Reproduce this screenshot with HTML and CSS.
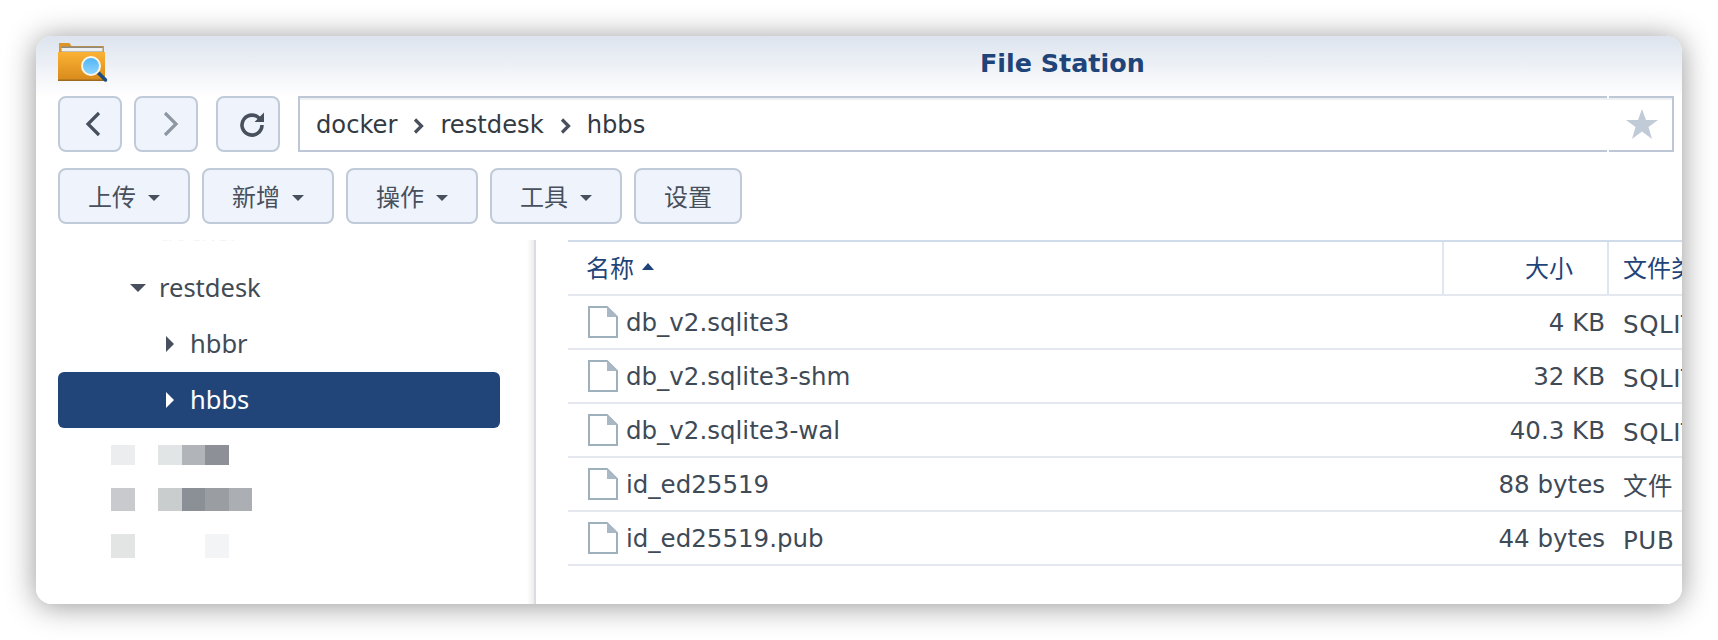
FILE: index.html
```html
<!DOCTYPE html>
<html lang="zh">
<head>
<meta charset="utf-8">
<title>File Station</title>
<link rel="stylesheet" href="styles.css">
</head>
<body>
<div class="window">
  <header class="titlebar">
    <svg class="app-icon" width="50" height="42" viewBox="0 0 50 42">
      <defs>
        <linearGradient id="fold" x1="0" y1="0" x2="0" y2="1"><stop offset="0" stop-color="#fbb233"/><stop offset="1" stop-color="#d88a1c"/></linearGradient>
        <linearGradient id="lens" x1="0" y1="0" x2="0" y2="1"><stop offset="0" stop-color="#4eb4f4"/><stop offset="1" stop-color="#8fd6ff"/></linearGradient>
      </defs>
      <path d="M1 1h10.500l2 3h32.500v7H1z" fill="#dd9526"/>
      <rect x="3.500" y="4.500" width="41" height="7" fill="#8d8b84"/>
      <rect x="3.500" y="6" width="41" height="3.500" fill="#eceef0"/>
      <path d="M0 10h47v28.500H0z" fill="url(#fold)"/>
      <rect x="0" y="37.500" width="47" height="1.500" fill="#9c6a1e"/>
      <path d="M40.500 31l7 7" stroke="#1b4d80" stroke-width="3.500" stroke-linecap="round"/>
      <circle cx="33" cy="24" r="9" fill="url(#lens)" stroke="#fdf6e6" stroke-width="2"/>
    </svg>
    <h1 class="app-title">File Station</h1>
  </header>

  <nav class="navbar">
    <button class="btn square back" type="button" aria-label="后退">
      <svg width="18" height="26" viewBox="0 0 18 26"><path d="M15 2 4 13l11 11" fill="none" stroke="#47505c" stroke-width="3.200"/></svg>
    </button>
    <button class="btn square forward" type="button" aria-label="前进">
      <svg width="18" height="26" viewBox="0 0 18 26"><path d="M3 2l11 11L3 24" fill="none" stroke="#8e97a2" stroke-width="3.200"/></svg>
    </button>
    <button class="btn square refresh" type="button" aria-label="刷新">
      <svg width="26" height="26" viewBox="0 0 26 26"><path d="M21.300 8.500A10 10 0 1 0 23 14" fill="none" stroke="#47505c" stroke-width="3.600"/><path d="M25 1.500V11h-9.500z" fill="#47505c"/></svg>
    </button>
    <div class="address">
      <div class="crumbs">
        <span>docker</span>
        <svg class="crumb-sep" width="12" height="16" viewBox="0 0 12 16"><path d="M2 1.500 8.500 8 2 14.500" fill="none" stroke="#47505c" stroke-width="3.200"/></svg>
        <span>restdesk</span>
        <svg class="crumb-sep" width="12" height="16" viewBox="0 0 12 16"><path d="M2 1.500 8.500 8 2 14.500" fill="none" stroke="#47505c" stroke-width="3.200"/></svg>
        <span>hbbs</span>
      </div>
      <div class="fav">
        <svg width="32" height="30" viewBox="0 0 32 30"><path d="M16 0l4 11h12l-9.500 7 3.500 12-10-7.500L6 30l3.500-12L0 11h12z" fill="#c1cbd8"/></svg>
      </div>
    </div>
  </nav>

  <div class="toolbar">
    <button class="btn tool" type="button">上传<i class="caret"></i></button>
    <button class="btn tool" type="button">新增<i class="caret"></i></button>
    <button class="btn tool" type="button">操作<i class="caret"></i></button>
    <button class="btn tool" type="button">工具<i class="caret"></i></button>
    <button class="btn tool plain" type="button">设置</button>
  </div>

  <main class="main">
    <aside class="sidebar">
      <div class="tree-clip"><span>docker</span></div>
      <div class="node level1"><i class="arrow-down"></i><span>restdesk</span></div>
      <div class="node level2"><i class="arrow-right"></i><span>hbbr</span></div>
      <div class="node level2 selected"><i class="arrow-right"></i><span>hbbs</span></div>
      <div class="mosaic m1"><i class="c-ec"></i><i></i><i class="c-e2"></i><i class="c-b1"></i><i class="c-8e"></i></div>
      <div class="mosaic m2"><i class="c-c8"></i><i></i><i class="c-cb"></i><i class="c-8b"></i><i class="c-9a"></i><i class="c-ab"></i></div>
      <div class="mosaic m3"><i class="c-e3"></i><i></i><i></i><i></i><i class="c-f3"></i></div>
    </aside>
    <section class="files">
      <div class="row head">
        <div class="cell name-h">名称<i class="sort"></i></div>
        <div class="cell size-h">大小</div>
        <div class="cell type-h">文件类型</div>
      </div>
      <div class="row">
        <div class="cell name"><svg class="file-icon" width="30" height="32" viewBox="0 0 30 32"><path d="M1 1h18l10 10v20H1z" fill="#fff" stroke="#9fb0bd" stroke-width="2"/><path d="M19 1l10 10h-10z" fill="#a9b8c4"/></svg>db_v2.sqlite3</div>
        <div class="cell size">4 KB</div>
        <div class="cell type">SQLITE3 文件</div>
      </div>
      <div class="row">
        <div class="cell name"><svg class="file-icon" width="30" height="32" viewBox="0 0 30 32"><path d="M1 1h18l10 10v20H1z" fill="#fff" stroke="#9fb0bd" stroke-width="2"/><path d="M19 1l10 10h-10z" fill="#a9b8c4"/></svg>db_v2.sqlite3-shm</div>
        <div class="cell size">32 KB</div>
        <div class="cell type">SQLITE3-SHM 文件</div>
      </div>
      <div class="row">
        <div class="cell name"><svg class="file-icon" width="30" height="32" viewBox="0 0 30 32"><path d="M1 1h18l10 10v20H1z" fill="#fff" stroke="#9fb0bd" stroke-width="2"/><path d="M19 1l10 10h-10z" fill="#a9b8c4"/></svg>db_v2.sqlite3-wal</div>
        <div class="cell size">40.3 KB</div>
        <div class="cell type">SQLITE3-WAL 文件</div>
      </div>
      <div class="row">
        <div class="cell name"><svg class="file-icon" width="30" height="32" viewBox="0 0 30 32"><path d="M1 1h18l10 10v20H1z" fill="#fff" stroke="#9fb0bd" stroke-width="2"/><path d="M19 1l10 10h-10z" fill="#a9b8c4"/></svg>id_ed25519</div>
        <div class="cell size">88 bytes</div>
        <div class="cell type">文件</div>
      </div>
      <div class="row">
        <div class="cell name"><svg class="file-icon" width="30" height="32" viewBox="0 0 30 32"><path d="M1 1h18l10 10v20H1z" fill="#fff" stroke="#9fb0bd" stroke-width="2"/><path d="M19 1l10 10h-10z" fill="#a9b8c4"/></svg>id_ed25519.pub</div>
        <div class="cell size">44 bytes</div>
        <div class="cell type">PUB 文件</div>
      </div>
    </section>
  </main>
</div>
</body>
</html>
```
FILE: styles.css
```css
* { box-sizing: border-box; }
html, body { margin: 0; height: 640px; overflow: hidden; background: #fff; }
body { padding: 36px; font-family: "Noto Sans", "Noto Sans CJK SC", sans-serif; }

.window {
  width: 1646px;
  height: 568px;
  border-radius: 16px;
  background: linear-gradient(#dde4ee 0, #fff 62px);
  box-shadow: 0 2px 30px rgba(0, 0, 0, .42);
  overflow: hidden;
  display: flex;
  flex-direction: column;
}

.titlebar { height: 60px; flex: none; display: flex; align-items: flex-start; padding: 6px 0 0 22px; }
.app-icon { flex: none; }
.app-title {
  margin: 6px 0 0 872px;
  font: bold 25.400px/30px "DejaVu Sans", sans-serif;
  color: #1f4479;
  white-space: nowrap;
}

.navbar { height: 56px; flex: none; display: flex; padding: 0 8px 0 22px; }
.btn {
  height: 56px;
  padding: 0;
  border: 2px solid #c0cad8;
  border-radius: 8px;
  background: #eff4fc;
  font: 24px/1 "Noto Sans CJK SC", sans-serif;
  color: #47505c;
  display: flex;
  align-items: center;
  justify-content: center;
}
.square { width: 64px; margin-right: 12px; }
.back { padding-left: 6px; }
.forward { padding-left: 10px; }
.refresh { margin-left: 6px; margin-right: 18px; padding-left: 8px; }
.address {
  position: relative;
  flex: 1;
  height: 56px;
  border: 2px solid #bdc7d5;
  box-shadow: inset 0 2px 0 #eef0f3;
  background: #fff;
  display: flex;
  align-items: center;
  justify-content: space-between;
}
.crumbs { display: flex; align-items: center; padding: 1px 0 0 16px; font: 24.200px "DejaVu Sans", sans-serif; color: #333a42; }
.crumb-sep { margin: 2px 15px 0 16px; }
.fav { width: 60px; display: flex; justify-content: center; }
.address::before, .address::after {
  content: "";
  position: absolute;
  right: 63px;
  width: 2px;
  height: 2px;
  background: #fff;
}
.address::before { top: -2px; }
.address::after { bottom: -2px; }

.toolbar { height: 56px; flex: none; margin-top: 16px; display: flex; gap: 12px; padding-left: 22px; }
.tool { width: 132px; }
.plain { width: 108px; }
.caret {
  width: 0; height: 0; margin-left: 12px; margin-top: 3px;
  border-left: 6.500px solid transparent;
  border-right: 6.500px solid transparent;
  border-top: 6.500px solid #47505c;
}

.main { flex: 1; min-height: 0; margin-top: 16px; display: flex; background: #fff; }
.sidebar {
  width: 500px;
  flex: none;
  border-right: 2px solid #d9dde3;
  padding: 0 34px 0 22px;
  overflow: hidden;
  background: linear-gradient(90deg, #fff calc(100% - 7px), #ececec);
}
.tree-clip { height: 20px; padding-left: 100px; overflow: hidden; font-size: 25.500px; color: #f4f4f4; }
.tree-clip span { display: block; margin-top: -26px; line-height: 34px; }
.node { height: 56px; display: flex; align-items: center; padding-bottom: 2px; font-size: 25.500px; color: #414b55; border-radius: 6px; }
.level1 { padding-left: 72px; }
.level2 { padding-left: 108px; }
.arrow-down {
  width: 0; height: 0; margin-right: 13px; margin-top: 2px;
  border-left: 8px solid transparent;
  border-right: 8px solid transparent;
  border-top: 8px solid #47505c;
}
.arrow-right {
  width: 0; height: 0; margin-right: 16px; margin-top: 2px;
  border-top: 8px solid transparent;
  border-bottom: 8px solid transparent;
  border-left: 8px solid #47505c;
}
.selected { background: #224579; color: #fff; }
.selected .arrow-right { border-left-color: #fff; }

.mosaic { display: flex; padding-left: 53px; }
.mosaic i { width: 23.500px; height: 100%; }
.m1 { height: 20px; margin-top: 17px; }
.m2 { height: 23px; margin-top: 23px; }
.m3 { height: 24px; margin-top: 23px; }
.c-ec { background: #ecedee; }
.c-e2 { background: #e2e5e6; }
.c-b1 { background: #b1b4b8; }
.c-8e { background: #8e9097; }
.c-c8 { background: #c8cacd; }
.c-cb { background: #c9cdce; }
.c-8b { background: #8b8f96; }
.c-9a { background: #9a9ea2; }
.c-ab { background: #abaeb2; }
.c-e3 { background: #e3e5e5; }
.c-f3 { background: #f3f4f6; }

.files { flex: 1; min-width: 0; margin-left: 32px; overflow: hidden; font: 24.500px "DejaVu Sans", "Noto Sans CJK SC", sans-serif; color: #3f4a57; }
.row { display: grid; grid-template-columns: 874px 165px 300px; height: 54px; border-bottom: 2px solid #e5e9ef; align-items: center; white-space: nowrap; }
.head { height: 56px; border-top: 2px solid #d0dcea; color: #1f4479; font: 24px "Noto Sans CJK SC", sans-serif; align-items: stretch; }
.cell { display: flex; align-items: center; }
.head .cell { padding-bottom: 3px; }
.name-h { padding-left: 18px; }
.size-h, .type-h { border-left: 2px solid #dde7f2; }
.size-h { justify-content: flex-end; padding-right: 34px; }
.type-h { padding-left: 14px; }
.sort {
  width: 0; height: 0; margin-left: 8px; margin-top: -1px;
  border-left: 6.500px solid transparent;
  border-right: 6.500px solid transparent;
  border-bottom: 7px solid #1f4479;
}
.name { padding-left: 20px; }
.file-icon { flex: none; margin-right: 8px; }
.size { justify-content: flex-end; padding-right: 2px; }
.type { padding-left: 16px; letter-spacing: .6px; }
```
